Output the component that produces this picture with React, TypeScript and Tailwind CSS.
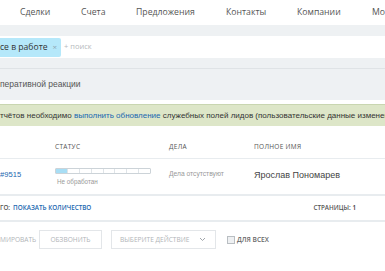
import React from "react";

const open = { fontFamily: '"Open Sans", "Liberation Sans", sans-serif' };
const arial = { fontFamily: '"Liberation Sans", Arial, sans-serif' };

function TopNav() {
  const items = [
    { label: "Сделки", w: "w-[81px]", pl: "pl-[20px]" },
    { label: "Счета", w: "w-[55px]", pl: "" },
    { label: "Предложения", w: "w-[90px]", pl: "" },
    { label: "Контакты", w: "w-[71px]", pl: "" },
    { label: "Компании", w: "w-[75px]", pl: "" },
    { label: "Мо", w: "", pl: "" },
  ];
  return (
    <div className="flex h-[25px] items-center bg-white text-[8.7px] text-[#555]" style={open}>
      {items.map((it, i) => (
        <div key={i} className={`shrink-0 ${it.w} ${it.pl}`}>
          {it.label}
        </div>
      ))}
    </div>
  );
}

function FilterBar() {
  return (
    <div className="bg-[#eef1f3] pt-[11px] pb-[10px] border-b border-[#dfe3e6]">
      <div className="flex h-[22px] items-center bg-white">
        <div
          className="flex h-[19px] w-[61px] items-center justify-between rounded-r-[2px] bg-[#b5e8fa] pr-[4px] text-[8.6px] text-[#333]"
          style={open}
        >
          <span>се в работе</span>
          <span className="text-[8px] text-[#8fa9b5]">×</span>
        </div>
        <span className="ml-[3px] text-[7.5px] text-[#b5b9bd]" style={open}>
          + поиск
        </span>
      </div>
    </div>
  );
}

function Status() {
  return (
    <div>
      <div className="flex h-[6px] w-[96px] overflow-hidden rounded-[1px] border border-[#ccd3d8]">
        {Array.from({ length: 8 }).map((_, i) => (
          <div
            key={i}
            className={`h-full flex-1 border-r border-[#dfe4e8] last:border-r-0 ${i === 0 ? "bg-[#a8def5]" : "bg-white"}`}
          />
        ))}
      </div>
      <div className="mt-[3px] pl-[2px] text-[6.3px] text-[#999]" style={arial}>
        Не обработан
      </div>
    </div>
  );
}

export default function App() {
  return (
    <div className="h-[271px] w-[385px] overflow-hidden bg-white whitespace-nowrap">
      <TopNav />
      <FilterBar />
      <div className="flex h-[31px] items-center bg-[#eef1f3] text-[8.5px] text-[#555]" style={arial}>
        перативной реакции
      </div>
      <div className="mt-[4px] flex h-[22px] items-center overflow-hidden border-t border-[#c9d6b1] bg-[#dde6c8] text-[8px] text-[#333]" style={arial}>
        <span>
          тчётов необходимо <span className="text-[#2067b0]">выполнить обновление</span> служебных полей лидов (пользовательские данные изменены)
        </span>
      </div>

      <div className="mt-[10px] flex h-[23px] items-center border-b border-[#e8ecef] text-[6.5px] tracking-[0.3px] text-[#555]" style={open}>
        <div className="w-[55px]" />
        <div className="w-[114px]">СТАТУС</div>
        <div className="w-[85px]">ДЕЛА</div>
        <div>ПОЛНОЕ ИМЯ</div>
      </div>

      <div className="flex h-[37px] items-start border-b-2 border-[#e8ecef] pt-[9px]">
        <div className="w-[55px] pt-[1px] text-[7.6px] text-[#2067b0]" style={arial}>#9515</div>
        <div className="w-[114px]">
          <Status />
        </div>
        <div className="w-[85px] pt-[1px] text-[6.7px] text-[#999]" style={arial}>Дела отсутствуют</div>
        <div className="pt-[1px] text-[9px] text-[#444]" style={arial}>Ярослав Пономарев</div>
      </div>

      <div className="flex h-[26px] items-center border-b-2 border-[#e8ecef] text-[6.3px] font-semibold" style={open}>
        <span className="text-[#555]">ГО:</span>
        <span className="ml-[3px] text-[#2067b0]">ПОКАЗАТЬ КОЛИЧЕСТВО</span>
        <span className="ml-auto mr-[29px] text-[#555]">
          СТРАНИЦЫ: <span className="text-[#333]">1</span>
        </span>
      </div>

      <div className="mt-[8px] flex items-center text-[6.6px] text-[#b0b4b8]" style={open}>
        <span className="w-[39px]">МИРОВАТЬ</span>
        <div className="flex h-[19px] w-[63px] items-center justify-center border border-[#e3e6e9]">ОБЗВОНИТЬ</div>
        <div className="ml-[9px] flex h-[19px] w-[105px] items-center justify-between border border-[#e3e6e9] pl-[8px] pr-[9px]">
          <span>ВЫБЕРИТЕ ДЕЙСТВИЕ</span>
          <svg width="7" height="5" viewBox="0 0 7 5" fill="none">
            <path d="M1 1l2.5 2.5L6 1" stroke="#a0a5aa" strokeWidth="1" />
          </svg>
        </div>
        <div className="ml-[11px] h-[8px] w-[8px] border border-[#b9bec2] bg-[#eef0f2]" />
        <span className="ml-[2px] font-semibold text-[#666]">ДЛЯ ВСЕХ</span>
      </div>
    </div>
  );
}
